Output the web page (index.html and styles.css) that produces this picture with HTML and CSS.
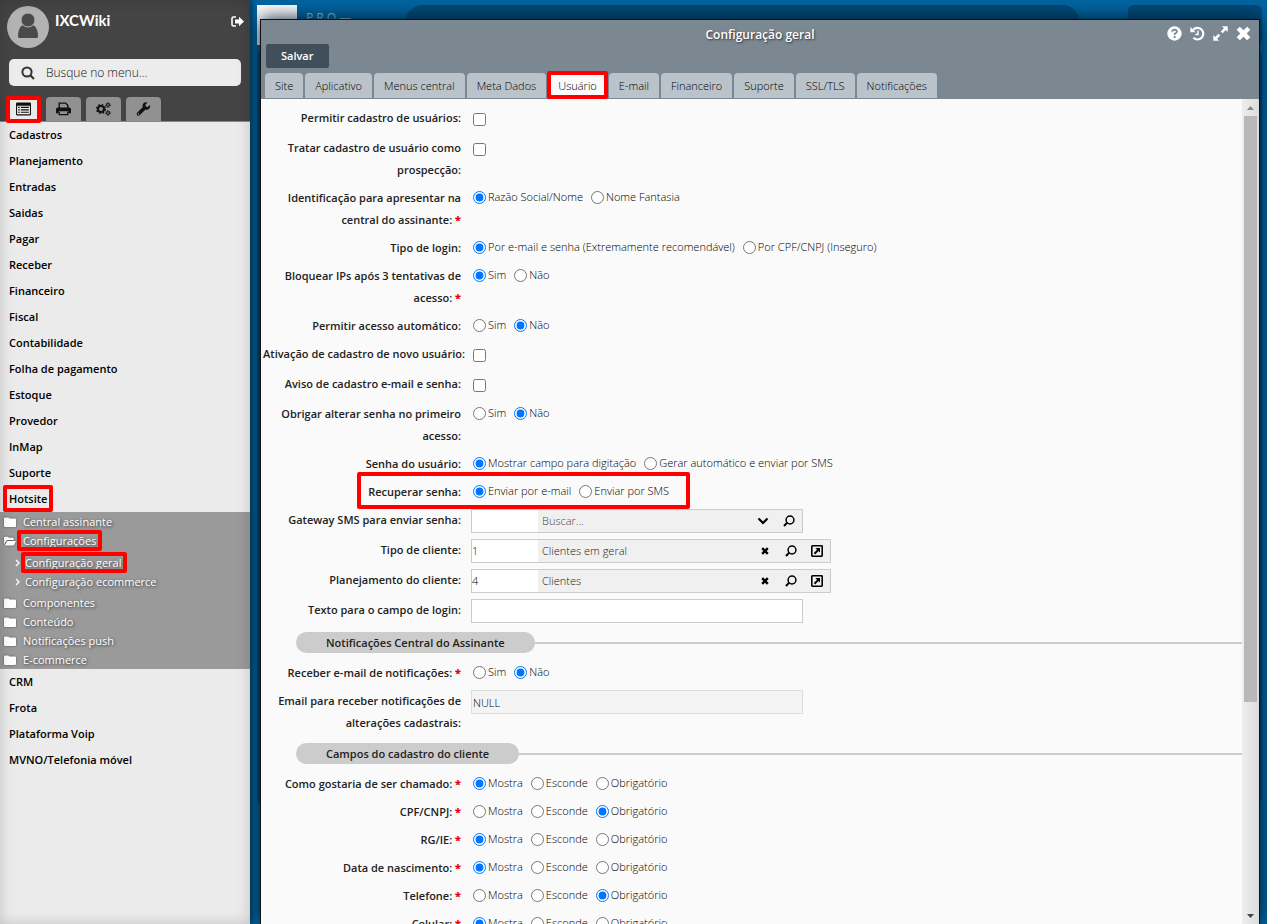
FILE: index.html
```html
<!DOCTYPE html>
<html lang="pt-BR">
<head>
<meta charset="utf-8">
<title>Configuração geral</title>
<link rel="stylesheet" href="styles.css">
</head>
<body>
<svg class="sprite" aria-hidden="true">
  <symbol id="folder" viewBox="0 0 12 10"><path d="M0 1.5Q0 .5 1 .5H4.2Q5.2.5 5.4 1.6H11Q12 1.6 12 2.6V9Q12 10 11 10H1Q0 10 0 9Z"/></symbol>
  <symbol id="folder-open" viewBox="0 0 13 10"><path d="M0 8.5V1.2Q0 .3 1 .3H4Q5 .3 5.2 1.4H9.4Q10.4 1.4 10.4 2.4V4H3.6L2.4 4.6Z"/><path d="M3.4 5H12.4Q13 5 12.7 5.6L10.8 9.4Q10.5 10 9.8 10H.8Z"/></symbol>
  <symbol id="lens" viewBox="0 0 12 12"><circle cx="7" cy="5" r="3.9" fill="none" stroke="currentColor" stroke-width="1.5"/><path d="M4.2 7.6L1 11" stroke="currentColor" stroke-width="2"/></symbol>
  <symbol id="cross" viewBox="0 0 14 14"><path d="M3.6.6L7 4 10.4.6 13.4 3.6 10 7 13.4 10.4 10.4 13.4 7 10 3.6 13.4.6 10.4 4 7 .6 3.6Z"/></symbol>
  <symbol id="popup" viewBox="0 0 12 12"><rect x=".8" y=".8" width="10.4" height="10.4" rx=".6" fill="none" stroke="currentColor" stroke-width="1.6"/><path d="M4.4 3H9V7.6L7.5 6.1 4.2 9.4 2.8 8 6 4.7Z"/></symbol>
</svg>

<div class="app">
  <aside class="sidebar">
    <header class="profile">
      <div class="user">
        <svg class="avatar" viewBox="0 0 42 42"><circle cx="21" cy="21" r="21" fill="#b3b3b3"/><path d="M11 31Q11 21 16 19Q21 23 26 19Q31 21 31 31Q31 32 29 32H13Q11 32 11 31Z" fill="#4a4a4a"/><circle cx="21" cy="14" r="7" fill="#4a4a4a" stroke="#b3b3b3"/></svg>
        <strong class="user-name">IXCWiki</strong>
        <button class="logout" aria-label="Sair"><svg viewBox="0 0 13 11"><path d="M5 1H2.5Q1 1 1 2.5V8.5Q1 10 2.5 10H5" fill="none" stroke="currentColor" stroke-width="1.6"/><path d="M4 3.5H8V.7L13 5.5 8 10.3V7.5H4Z"/></svg></button>
      </div>
      <label class="search">
        <svg viewBox="0 0 14 14"><circle cx="6" cy="6" r="4.6" fill="none" stroke="currentColor" stroke-width="2"/><path d="M9.3 9.3L13 13" stroke="currentColor" stroke-width="2.2"/></svg>
        <input type="text" placeholder="Busque no menu..." aria-label="Busque no menu">
      </label>
      <div class="modes">
        <button class="mode mode-on marked" aria-label="Menu"><svg viewBox="0 0 14 12"><path d="M1 0H13Q14 0 14 1V11Q14 12 13 12H1Q0 12 0 11V1Q0 0 1 0ZM1 3V11H13V3Z" fill-rule="evenodd"/><path d="M2 4H3.5V5H2ZM4.5 4H12V5H4.5ZM2 6.3H3.5V7.3H2ZM4.5 6.3H12V7.3H4.5ZM2 8.6H3.5V9.6H2ZM4.5 8.6H12V9.6H4.5Z"/></svg></button>
        <button class="mode" aria-label="Imprimir"><svg viewBox="0 0 14 12"><path d="M3 5V.5H9L11 2.5V5" fill="none" stroke="currentColor" stroke-width="1.3"/><path d="M1.5 4.6H12.5Q14 4.6 14 6V10H11.5V8H2.5V10H0V6Q0 4.6 1.5 4.6Z"/><path d="M3 8.5V11.3H11V8.5" fill="none" stroke="currentColor" stroke-width="1.2"/></svg></button>
        <button class="mode" aria-label="Configurações do sistema"><svg viewBox="0 0 15 14"><circle cx="5" cy="7" r="3" fill="none" stroke="currentColor" stroke-width="2"/><circle cx="5" cy="7" r="4.4" fill="none" stroke="currentColor" stroke-width="1.4" stroke-dasharray="1.8 1.66"/><circle cx="12" cy="3" r="1.4" fill="none" stroke="currentColor" stroke-width="1"/><circle cx="12" cy="3" r="2.3" fill="none" stroke="currentColor" stroke-dasharray="1 .81"/><circle cx="12" cy="11" r="1.4" fill="none" stroke="currentColor" stroke-width="1"/><circle cx="12" cy="11" r="2.3" fill="none" stroke="currentColor" stroke-dasharray="1 .81"/></svg></button>
        <button class="mode" aria-label="Ferramentas"><svg viewBox="0 0 13 13"><path d="M12.6 2.7L10.4 4.6 8.6 4.2 8.2 2.6 10.2.5Q7.6-.3 6.2 1.6Q5.2 3 5.9 4.7L.6 9.9Q-.3 11 .6 12.2Q1.8 13.3 3 12.4L8.1 7.1Q10.2 7.7 11.6 6.6Q13.1 5 12.6 2.7ZM2 10.4A.7.7 0 1 1 1.9 10.4Z"/></svg></button>
      </div>
    </header>
    <nav class="menu">
      <a class="item" href="#">Cadastros</a>
      <a class="item" href="#">Planejamento</a>
      <a class="item" href="#">Entradas</a>
      <a class="item" href="#">Saidas</a>
      <a class="item" href="#">Pagar</a>
      <a class="item" href="#">Receber</a>
      <a class="item" href="#">Financeiro</a>
      <a class="item" href="#">Fiscal</a>
      <a class="item" href="#">Contabilidade</a>
      <a class="item" href="#">Folha de pagamento</a>
      <a class="item" href="#">Estoque</a>
      <a class="item" href="#">Provedor</a>
      <a class="item" href="#">InMap</a>
      <a class="item" href="#">Suporte</a>
      <a class="item" href="#"><span class="marked mark-item">Hotsite</span></a>
      <div class="submenu">
        <a class="sub" href="#"><svg><use href="#folder"/></svg>Central assinante</a>
        <a class="sub" href="#"><svg><use href="#folder-open"/></svg><span class="marked mark-sub">Configurações</span></a>
        <div class="nested">
          <a class="leaf" href="#"><svg viewBox="0 0 5 8"><path d="M1 1L4 4 1 7" fill="none" stroke="currentColor" stroke-width="1.3"/></svg><span class="marked mark-leaf">Configuração geral</span></a>
          <a class="leaf" href="#"><svg viewBox="0 0 5 8"><path d="M1 1L4 4 1 7" fill="none" stroke="currentColor" stroke-width="1.3"/></svg>Configuração ecommerce</a>
        </div>
        <a class="sub" href="#"><svg><use href="#folder"/></svg>Componentes</a>
        <a class="sub" href="#"><svg><use href="#folder"/></svg>Conteúdo</a>
        <a class="sub" href="#"><svg><use href="#folder"/></svg>Notificações push</a>
        <a class="sub" href="#"><svg><use href="#folder"/></svg>E-commerce</a>
      </div>
      <a class="item" href="#">CRM</a>
      <a class="item" href="#">Frota</a>
      <a class="item" href="#">Plataforma Voip</a>
      <a class="item" href="#">MVNO/Telefonia móvel</a>
    </nav>
  </aside>

  <main class="desktop">
    <div class="backdrop" aria-hidden="true">
      <div class="logo-tile"></div>
      <div class="logo-text">P R O —</div>
      <div class="panel panel-top"></div>
      <div class="panel panel-side"></div>
      <div class="panel panel-main"></div>
    </div>

    <section class="window">
      <header class="window-head">
        <div class="title-bar">
          <h1>Configuração geral</h1>
          <div class="window-tools">
            <button aria-label="Ajuda"><svg viewBox="0 0 15 15"><circle cx="7.5" cy="7.5" r="7.2"/><path d="M5.2 5.8Q5.3 3.6 7.6 3.6Q9.8 3.7 9.8 5.6Q9.8 6.7 8.6 7.3Q7.6 7.8 7.6 9" fill="none" stroke="#7b8791" stroke-width="1.8"/><rect x="6.7" y="10" width="1.9" height="1.9" fill="#7b8791"/></svg></button>
            <button aria-label="Histórico"><svg viewBox="0 0 15 15"><path d="M3.2 3.8A5.8 5.8 0 1 1 3.4 11.8" fill="none" stroke="currentColor" stroke-width="2.2"/><path d="M.3 1V6.2H5.6Z"/><path d="M8 4.5V8.6H5.3" fill="none" stroke="currentColor" stroke-width="1.5"/></svg></button>
            <button aria-label="Maximizar"><svg viewBox="0 0 15 15"><path d="M9 .3H14.7V6L12.8 4.1 9.6 7.3 7.7 5.4 10.9 2.2ZM6 14.7H.3V9L2.2 10.9 5.4 7.7 7.3 9.6 4.1 12.8Z"/></svg></button>
            <button aria-label="Fechar"><svg><use href="#cross"/></svg></button>
          </div>
        </div>
        <button class="save">Salvar</button>
        <nav class="tabs">
          <button class="tab">Site</button>
          <button class="tab">Aplicativo</button>
          <button class="tab">Menus central</button>
          <button class="tab">Meta Dados</button>
          <button class="tab tab-on marked">Usuário</button>
          <button class="tab">E-mail</button>
          <button class="tab">Financeiro</button>
          <button class="tab">Suporte</button>
          <button class="tab">SSL/TLS</button>
          <button class="tab">Notificações</button>
        </nav>
      </header>

      <div class="window-body">
        <form class="form">
          <div class="row"><label class="caption" for="c1">Permitir cadastro de usuários:</label><div class="check"><input type="checkbox" id="c1"></div></div>
          <div class="row"><label class="caption" for="c2">Tratar cadastro de usuário como prospecção:</label><div class="check"><input type="checkbox" id="c2"></div></div>
          <div class="row"><span class="caption">Identificação para apresentar na central do assinante: <b>*</b></span><div class="options"><label><input type="radio" name="ident" checked>Razão Social/Nome</label><label><input type="radio" name="ident">Nome Fantasia</label></div></div>
          <div class="row"><span class="caption">Tipo de login:</span><div class="options"><label><input type="radio" name="login" checked>Por e-mail e senha (Extremamente recomendável)</label><label><input type="radio" name="login">Por CPF/CNPJ (Inseguro)</label></div></div>
          <div class="row"><span class="caption">Bloquear IPs após 3 tentativas de acesso: <b>*</b></span><div class="options"><label><input type="radio" name="ips" checked>Sim</label><label><input type="radio" name="ips">Não</label></div></div>
          <div class="row"><span class="caption">Permitir acesso automático:</span><div class="options"><label><input type="radio" name="auto">Sim</label><label><input type="radio" name="auto" checked>Não</label></div></div>
          <div class="row row-long"><label class="caption" for="c3">Ativação de cadastro de novo usuário:</label><div class="check"><input type="checkbox" id="c3"></div></div>
          <div class="row"><label class="caption" for="c4">Aviso de cadastro e-mail e senha:</label><div class="check"><input type="checkbox" id="c4"></div></div>
          <div class="row"><span class="caption">Obrigar alterar senha no primeiro acesso:</span><div class="options"><label><input type="radio" name="first">Sim</label><label><input type="radio" name="first" checked>Não</label></div></div>
          <div class="row"><span class="caption">Senha do usuário:</span><div class="options"><label><input type="radio" name="pass" checked>Mostrar campo para digitação</label><label><input type="radio" name="pass">Gerar automático e enviar por SMS</label></div></div>
          <div class="row row-marked"><span class="caption">Recuperar senha:</span><div class="options"><label><input type="radio" name="recover" checked>Enviar por e-mail</label><label><input type="radio" name="recover">Enviar por SMS</label></div></div>
          <div class="row"><label class="caption" for="t1">Gateway SMS para enviar senha:</label><div class="lookup"><input class="code" id="t1" type="text"><input class="desc" type="text" placeholder="Buscar..." aria-label="Buscar gateway"><button type="button" aria-label="Abrir lista"><svg viewBox="0 0 12 12"><path d="M1.5 3.5L6 8 10.5 3.5" fill="none" stroke="currentColor" stroke-width="2.2"/></svg></button><button type="button" aria-label="Pesquisar"><svg><use href="#lens"/></svg></button></div></div>
          <div class="row"><label class="caption" for="t2">Tipo de cliente:</label><div class="lookup lookup-wide"><input class="code" id="t2" type="text" value="1"><input class="desc" type="text" value="Clientes em geral" aria-label="Descrição do tipo"><button type="button" aria-label="Limpar"><svg class="small"><use href="#cross"/></svg></button><button type="button" aria-label="Pesquisar"><svg><use href="#lens"/></svg></button><button type="button" aria-label="Abrir cadastro"><svg><use href="#popup"/></svg></button></div></div>
          <div class="row"><label class="caption" for="t3">Planejamento do cliente:</label><div class="lookup lookup-wide"><input class="code" id="t3" type="text" value="4"><input class="desc" type="text" value="Clientes" aria-label="Descrição do planejamento"><button type="button" aria-label="Limpar"><svg class="small"><use href="#cross"/></svg></button><button type="button" aria-label="Pesquisar"><svg><use href="#lens"/></svg></button><button type="button" aria-label="Abrir cadastro"><svg><use href="#popup"/></svg></button></div></div>
          <div class="row"><label class="caption" for="t4">Texto para o campo de login:</label><input class="text" id="t4" type="text"></div>
          <h2 class="divider"><span>Notificações Central do Assinante</span></h2>
          <div class="row"><span class="caption">Receber e-mail de notificações: <b>*</b></span><div class="options"><label><input type="radio" name="notif">Sim</label><label><input type="radio" name="notif" checked>Não</label></div></div>
          <div class="row"><label class="caption" for="t5">Email para receber notificações de alterações cadastrais:</label><input class="text text-off" id="t5" type="text" value="NULL" readonly></div>
          <h2 class="divider"><span>Campos do cadastro do cliente</span></h2>
          <div class="row"><span class="caption">Como gostaria de ser chamado: <b>*</b></span><div class="options"><label><input type="radio" name="f1" checked>Mostra</label><label><input type="radio" name="f1">Esconde</label><label><input type="radio" name="f1">Obrigatório</label></div></div>
          <div class="row"><span class="caption">CPF/CNPJ: <b>*</b></span><div class="options"><label><input type="radio" name="f2">Mostra</label><label><input type="radio" name="f2">Esconde</label><label><input type="radio" name="f2" checked>Obrigatório</label></div></div>
          <div class="row"><span class="caption">RG/IE: <b>*</b></span><div class="options"><label><input type="radio" name="f3" checked>Mostra</label><label><input type="radio" name="f3">Esconde</label><label><input type="radio" name="f3">Obrigatório</label></div></div>
          <div class="row"><span class="caption">Data de nascimento: <b>*</b></span><div class="options"><label><input type="radio" name="f4" checked>Mostra</label><label><input type="radio" name="f4">Esconde</label><label><input type="radio" name="f4">Obrigatório</label></div></div>
          <div class="row"><span class="caption">Telefone: <b>*</b></span><div class="options"><label><input type="radio" name="f5">Mostra</label><label><input type="radio" name="f5">Esconde</label><label><input type="radio" name="f5" checked>Obrigatório</label></div></div>
          <div class="row"><span class="caption">Celular: <b>*</b></span><div class="options"><label><input type="radio" name="f6" checked>Mostra</label><label><input type="radio" name="f6">Esconde</label><label><input type="radio" name="f6">Obrigatório</label></div></div>
        </form>
        <div class="scrollbar" aria-hidden="true">
          <svg class="arrow-up" viewBox="0 0 7 4"><path d="M0 4L3.5 0 7 4Z"/></svg>
          <div class="track"><div class="thumb"></div></div>
          <svg class="arrow-down" viewBox="0 0 7 4"><path d="M0 0L3.5 4 7 0Z"/></svg>
        </div>
      </div>
    </section>
  </main>
</div>
</body>
</html>
```
FILE: styles.css
```css
*, *::after { box-sizing: border-box; }
body { margin: 0; font: 300 11px/22px "Open Sans", "Noto Sans", sans-serif; color: #000; }
button, input { font: inherit; color: inherit; margin: 0; padding: 0; border: 0; background: none; }
a { color: inherit; text-decoration: none; }
svg { fill: currentColor; display: block; flex: none; }
.sprite { position: absolute; width: 0; height: 0; }

.app { display: flex; height: 100vh; overflow: hidden; }

/* red frames that point out a control */
.marked { position: relative; }
.marked::after, .row-marked::after {
  content: ""; position: absolute; z-index: 2; pointer-events: none;
  border: 4px solid #fe0000; border-radius: 2px;
}

/* sidebar */
.sidebar { position: relative; z-index: 3; flex: 0 0 250px; background: #ebebeb; box-shadow: 1px 0 6px rgba(0, 0, 0, .6); }
.sidebar::after { content: ""; position: absolute; inset: 0; pointer-events: none; box-shadow: inset 0 0 14px rgba(0, 0, 0, .18); }
.profile { background: #444; color: #fff; border-bottom: 1px solid #888; height: 122px; display: flex; flex-direction: column; padding: 6px 6px 0; }
.user { display: flex; gap: 6px; height: 53px; padding-left: 1px; }
.avatar { width: 42px; height: 42px; }
.user-name { font: 700 15px/28px Lato, sans-serif; flex: 1; }
.logout { align-self: flex-start; padding-top: 10px; }
.logout svg { width: 13px; height: 11px; }
.search { display: flex; align-items: center; gap: 11px; height: 27px; margin: 0 3px; padding: 0 12px; border-radius: 5px; background: #ececec; color: #333; }
.search svg { width: 14px; height: 14px; }
.search input { flex: 1; min-width: 0; font-size: 12px; outline: 0; }
.search input::placeholder { color: #111; opacity: 1; }
.modes { display: flex; gap: 5px; margin-top: auto; }
.mode { width: 35px; height: 24px; display: grid; place-items: center; background: #919191; border-radius: 4px 4px 0 0; color: #111; }
.mode svg { width: 15px; height: 14px; }
.mode-on { background: #ebebeb; }
.mode-on::after { inset: -1px 0 -2px; }

.item { display: block; padding-left: 9px; font-weight: 600; line-height: 26px; color: #000; }
.mark-item::after { inset: -6px -6px; }
.submenu { background: #9a9a9a; color: #fff; font-weight: 400; line-height: 19px; text-shadow: 1px 1px 3px #333; }
.sub { display: flex; align-items: center; gap: 7px; padding-left: 4px; }
.sub svg { width: 12px; height: 10px; filter: drop-shadow(0 0 1px #555); }
.mark-sub::after { inset: -1px -6px; }
.nested { padding: 3px 0 2px; }
.leaf { display: flex; align-items: center; gap: 5px; padding-left: 15px; }
.leaf svg { width: 5px; height: 8px; }
.mark-leaf::after { inset: -1px -5px -1px -4px; }

/* desktop behind the window */
.desktop { position: relative; flex: 1; min-width: 0; background: #0065a1; padding: 19px 7px 0 10px; overflow: hidden; }
.logo-tile { position: absolute; left: 7px; top: 5px; width: 40px; height: 40px; background: #fff; }
.logo-text { position: absolute; left: 56px; top: 7px; font-size: 12px; font-weight: 400; color: #9fc3da; }
.panel { position: absolute; background: #004a78; }
.panel-top { left: 155px; right: 187px; top: 5px; height: 40px; border-radius: 18px 18px 0 0; }
.panel-side { right: 5px; width: 134px; top: 5px; height: 40px; border-radius: 6px; }
.panel-main { left: 7px; right: 5px; top: 50px; bottom: 120px; border-radius: 6px; }

.window { position: relative; display: flex; flex-direction: column; height: 100%; border: 1px solid #111; border-bottom: 0; background: #fafafa; box-shadow: 0 0 18px #001a2d; }
.window-head { display: flex; flex-direction: column; align-items: flex-start; background: #7b8791; padding: 0 4px; border-bottom: 1px solid #7b8791; }
.title-bar { position: relative; align-self: stretch; height: 24px; display: flex; justify-content: center; padding-top: 4px; }
.title-bar h1 { margin: 0; font-size: 12px; font-weight: 600; line-height: 22px; color: #fff; text-shadow: 1px 1px 2px #333; }
.window-tools { position: absolute; right: 4px; top: 6px; display: flex; gap: 8px; color: #fff; }
.window-tools svg { width: 15px; height: 15px; }
.save { height: 24px; margin: 0 0 5px 1px; padding: 0 15px; border-radius: 2px; background: #414f5a; color: #fff; font-weight: 600; line-height: 24px; }
.tabs { display: flex; gap: 2px; }
.tab { height: 25px; padding: 0 10px; border-radius: 4px 4px 0 0; background: #bbc3ca; line-height: 25px; color: #000; white-space: nowrap; }
.tab-on { background: #fafafa; }
.tab-on::after { inset: -2px -1px -1px -1px; }

.window-body { flex: 1; min-height: 0; display: flex; }
.form { flex: 1; min-width: 0; padding: 8px 0 0; overflow: hidden; }
.row { position: relative; display: flex; gap: 10px; padding-bottom: 6px; }
.caption { flex: 0 0 200px; text-align: right; font-weight: 600; color: #222; }
.caption b { color: #e00; }
.row-long { gap: 4px; }
.row-long .caption { flex-basis: 206px; white-space: nowrap; text-align: center; }
.check { height: 24px; padding-left: 2px; display: flex; align-items: center; }
.check input { width: 13px; height: 13px; }
.options { display: flex; gap: 8px; height: 20px; padding-left: 2px; }
.options label { display: flex; align-items: center; gap: 2px; line-height: 20px; white-space: nowrap; }
.options input { width: 13px; height: 13px; }
.row-marked::after { left: 96px; width: 333px; top: -9px; height: 37px; }
.lookup, .text { width: 332px; height: 24px; border: 1px solid #ccc; background: #fff; }
.text { padding: 0 1px; }
.text-off { background: #f4f4f4; border-color: #ddd; }
.lookup { display: flex; background: #f0f0f0; }
.lookup-wide { width: 360px; }
.code { width: 66px; background: #fff; }
.desc { flex: 1; min-width: 0; padding-left: 4px; color: #222; }
.desc::placeholder { color: #444; opacity: 1; }
.lookup button { width: 26px; display: grid; place-items: center; }
.lookup svg { width: 12px; height: 12px; }
.lookup .small { width: 8px; height: 8px; }

.divider { display: flex; align-items: center; height: 27px; margin: 0 0 6px 35px; font-size: 11px; font-weight: 600; color: #222; }
.divider span { padding: 0 30px; border-radius: 11px; background: #ccc; line-height: 21px; }
.divider::after { content: ""; flex: 1; height: 2px; background: #ccc; }

.scrollbar { width: 17px; display: flex; flex-direction: column; align-items: center; padding: 7px 0 6px; background: linear-gradient(90deg, #eee, #dcdcdc); }
.scrollbar svg { width: 7px; height: 4px; }
.arrow-up { color: #888; }
.arrow-down { color: #444; }
.track { flex: 1; align-self: stretch; margin: 6px 2px; }
.thumb { height: 74%; background: #b8b8b8; }
```
